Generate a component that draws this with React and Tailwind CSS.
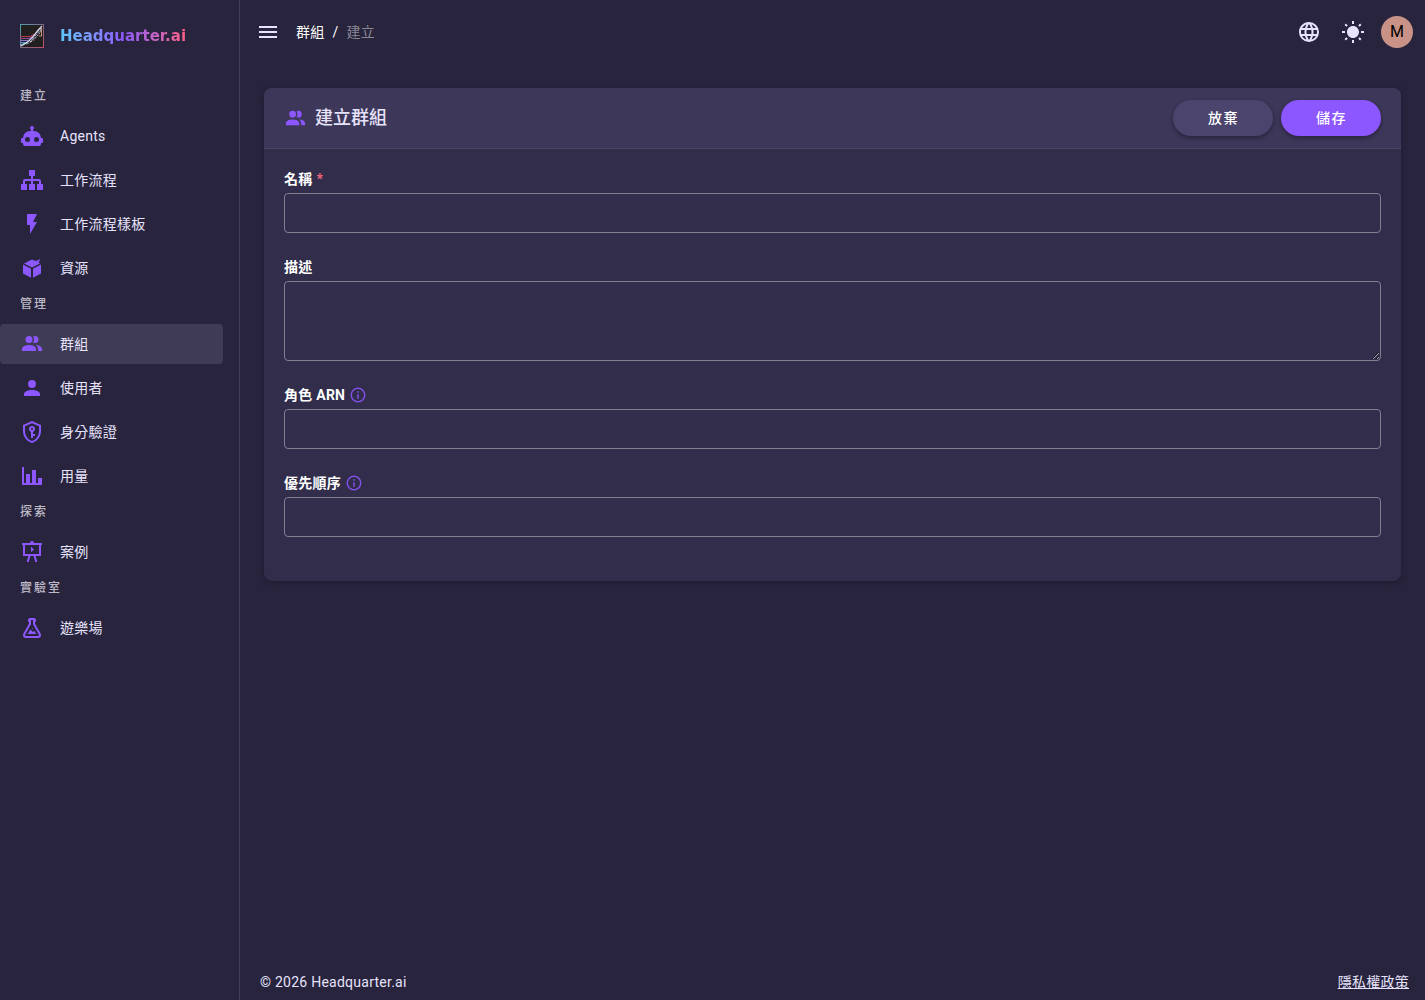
import { useState } from 'react'

const icons = {
    robot: 'M12,2A2,2 0 0,1 14,4C14,4.74 13.6,5.39 13,5.73V7H14A7,7 0 0,1 21,14H22A1,1 0 0,1 23,15V18A1,1 0 0,1 22,19H21V20A2,2 0 0,1 19,22H5A2,2 0 0,1 3,20V19H2A1,1 0 0,1 1,18V15A1,1 0 0,1 2,14H3A7,7 0 0,1 10,7H11V5.73C10.4,5.39 10,4.74 10,4A2,2 0 0,1 12,2M7.5,13A2.5,2.5 0 0,0 5,15.5A2.5,2.5 0 0,0 7.5,18A2.5,2.5 0 0,0 10,15.5A2.5,2.5 0 0,0 7.5,13M16.5,13A2.5,2.5 0 0,0 14,15.5A2.5,2.5 0 0,0 16.5,18A2.5,2.5 0 0,0 19,15.5A2.5,2.5 0 0,0 16.5,13Z',
    sitemap: 'M9,2V8H11V11H5C3.89,11 3,11.89 3,13V16H1V22H7V16H5V13H11V16H9V22H15V16H13V13H19V16H17V22H23V16H21V13C21,11.89 20.11,11 19,11H13V8H15V2H9Z',
    flash: 'M7,2V13H10V22L17,10H13L17,2H7Z',
    box: 'M3,8.6L11,12.8V21.8L3,17.6ZM21,8.6L13,12.8V21.8L21,17.6ZM4,7.4L12,3.4L14.8,4.8C17,4.9 18.7,4.2 20,2.8C19.9,4.2 19.4,5.4 18.6,6.4L20,7.4L12,11.4Z',
    group: 'M16 17V19H2V17S2 13 9 13 16 17 16 17M12.5 7.5A3.5 3.5 0 1 0 9 11A3.5 3.5 0 0 0 12.5 7.5M15.94 13A5.32 5.32 0 0 1 18 17V19H22V17S22 13.37 15.94 13M15 4A3.39 3.39 0 0 0 13.07 4.59A5 5 0 0 1 13.07 10.41A3.39 3.39 0 0 0 15 11A3.5 3.5 0 0 0 15 4Z',
    user: 'M12,4A4,4 0 0,1 16,8A4,4 0 0,1 12,12A4,4 0 0,1 8,8A4,4 0 0,1 12,4M12,14C16.42,14 20,15.79 20,18V20H4V18C4,15.79 7.58,14 12,14Z',
    shield: 'M21,11C21,16.55 17.16,21.74 12,23C6.84,21.74 3,16.55 3,11V5L12,1L21,5V11M12,21C15.75,20 19,15.54 19,11.22V6.3L12,3.18L5,6.3V11.22C5,15.54 8.25,20 12,21M12,6A3,3 0 0,1 15,9C15,10.31 14.17,11.42 13,11.83V14H15V16H13V18H11V11.83C9.83,11.42 9,10.31 9,9A3,3 0 0,1 12,6M12,8A1,1 0 0,0 11,9A1,1 0 0,0 12,10A1,1 0 0,0 13,9A1,1 0 0,0 12,8Z',
    chart: 'M22,21H2V3H4V19H6V10H10V19H12V6H16V19H18V14H22V21Z',
    presentation: 'M2,3H10C10,1.7 10.9,1 12,1C13.1,1 14,1.7 14,3H22V5H21V16H15.7L17.2,22H15.2L13.6,16H10.4L8.8,22H6.8L8.3,16H3V5H2ZM5,5V14H19V5ZM11,6.8L14,9.5L11,12.2Z',
    flask: 'M5,19A1,1 0 0,0 6,20H18A1,1 0 0,0 19,19C19,18.79 18.93,18.59 18.82,18.43L13,8.35V4H11V8.35L5.18,18.43C5.07,18.59 5,18.79 5,19M6,22A3,3 0 0,1 3,19C3,18.4 3.18,17.84 3.5,17.37L9,7.81V6A1,1 0 0,1 8,5V4A2,2 0 0,1 10,2H14A2,2 0 0,1 16,4V5A1,1 0 0,1 15,6V7.81L20.5,17.37C20.82,17.84 21,18.4 21,19A3,3 0 0,1 18,22H6M13,16L14.34,14.66L16.27,18H7.73L10.39,13.39L13,16M12.5,12A0.5,0.5 0 0,1 13,12.5A0.5,0.5 0 0,1 12.5,13A0.5,0.5 0 0,1 12,12.5A0.5,0.5 0 0,1 12.5,12Z',
    menu: 'M3,6H21V8H3V6M3,11H21V13H3V11M3,16H21V18H3V16Z',
    web: 'M16.36,14C16.44,13.34 16.5,12.68 16.5,12C16.5,11.32 16.44,10.66 16.36,10H19.74C19.9,10.64 20,11.31 20,12C20,12.69 19.9,13.36 19.74,14M14.59,19.56C15.19,18.45 15.65,17.25 15.97,16H18.92C17.96,17.65 16.43,18.93 14.59,19.56M14.34,14H9.66C9.56,13.34 9.5,12.68 9.5,12C9.5,11.32 9.56,10.65 9.66,10H14.34C14.43,10.65 14.5,11.32 14.5,12C14.5,12.68 14.43,13.34 14.34,14M12,19.96C11.17,18.76 10.5,17.43 10.09,16H13.91C13.5,17.43 12.83,18.76 12,19.96M8,8H5.08C6.03,6.34 7.57,5.06 9.4,4.44C8.8,5.55 8.35,6.75 8,8M5.08,16H8C8.35,17.25 8.8,18.45 9.4,19.56C7.57,18.93 6.03,17.65 5.08,16M4.26,14C4.1,13.36 4,12.69 4,12C4,11.31 4.1,10.64 4.26,10H7.64C7.56,10.66 7.5,11.32 7.5,12C7.5,12.68 7.56,13.34 7.64,14M12,4.03C12.83,5.23 13.5,6.57 13.91,8H10.09C10.5,6.57 11.17,5.23 12,4.03M18.92,8H15.97C15.65,6.75 15.19,5.55 14.59,4.44C16.43,5.07 17.96,6.34 18.92,8M12,2C6.47,2 2,6.5 2,12A10,10 0 0,0 12,22A10,10 0 0,0 22,12A10,10 0 0,0 12,2Z',
    sun: 'M3.55 19.09L4.96 20.5L6.76 18.71L5.34 17.29M12 6C8.69 6 6 8.69 6 12S8.69 18 12 18 18 15.31 18 12C18 8.68 15.31 6 12 6M20 13H23V11H20M17.24 18.71L19.04 20.5L20.45 19.09L18.66 17.29M20.45 5L19.04 3.6L17.24 5.39L18.66 6.81M13 1H11V4H13M6.76 5.39L4.96 3.6L3.55 5L5.34 6.81L6.76 5.39M1 13H4V11H1M13 20H11V23H13',
    info: 'M11,9H13V7H11M12,20C7.59,20 4,16.41 4,12C4,7.59 7.59,4 12,4C16.41,4 20,7.59 20,12C20,16.41 16.41,20 12,20M12,2A10,10 0 0,0 2,12A10,10 0 0,0 12,22A10,10 0 0,0 22,12A10,10 0 0,0 12,2M11,17H13V11H11V17Z',
}

const sections = [
    {
        title: '建立',
        items: [
            { icon: 'robot', label: 'Agents' },
            { icon: 'sitemap', label: '工作流程' },
            { icon: 'flash', label: '工作流程樣板' },
            { icon: 'box', label: '資源' },
        ],
    },
    {
        title: '管理',
        items: [
            { icon: 'group', label: '群組' },
            { icon: 'user', label: '使用者' },
            { icon: 'shield', label: '身分驗證' },
            { icon: 'chart', label: '用量' },
        ],
    },
    { title: '探索', items: [{ icon: 'presentation', label: '案例' }] },
    { title: '實驗室', items: [{ icon: 'flask', label: '遊樂場' }] },
]

const Icon = ({ name, className = 'size-6' }) => (
    <svg viewBox="0 0 24 24" fill="currentColor" fillRule="evenodd" className={`shrink-0 ${className}`} aria-hidden="true">
        <path d={icons[name]} />
    </svg>
)

const Logo = () => (
    <svg viewBox="0 0 24 24" fill="none" className="size-6 shrink-0" aria-hidden="true">
        <defs>
            <linearGradient id="frame" x1="0" y1="0" x2="1" y2="1">
                <stop offset="0" stopColor="#4f9fae" />
                <stop offset="0.5" stopColor="#806a86" />
                <stop offset="1" stopColor="#b94f67" />
            </linearGradient>
        </defs>
        <rect x="0.5" y="0.5" width="23" height="23" fill="#211f20" stroke="url(#frame)" />
        <path d="M0 12.5H10L14 10" stroke="#b13c4c" />
        <path d="M0 14.5H9L14 11" stroke="#8e4b9b" />
        <path d="M0 16.5H8L12 13" stroke="#8a74d0" />
        <path d="M0 18.5H6L10 16" stroke="#5a91c9" />
        <path d="M0 20.5C4 20 6 19 9 17" stroke="#62c7dd" />
        <path d="M1 22C6 19 9 18 12 14S17 7 22 2" stroke="#e8e4ee" strokeWidth="1.2" />
        <path d="M6 20C11 19 12 16 15 12S20 8 21 3" stroke="#a9b9e8" strokeDasharray="3 1" />
        <path d="M10 18C14 17 15 14 17 12S20 9 21.500 5" stroke="#d8c3d5" strokeDasharray="2 1" />
        <path d="M21.500 4V12H19" stroke="#c79d75" />
    </svg>
)

const Sidebar = () => (
    <aside className="flex w-60 shrink-0 flex-col border-r border-[#433f56]">
        <a href="#" className="flex h-20 items-center gap-4 px-5 pb-2">
            <Logo />
            <span className="bg-linear-to-r from-[#5ac8fa] via-[#8c57ff] to-[#ff5c83] bg-clip-text font-['DejaVu_Sans'] text-[15px] leading-5 font-bold text-transparent">
                Headquarter.ai
            </span>
        </a>
        <nav>
            {sections.map((section) => (
                <section key={section.title}>
                    <h2 className="flex h-8 items-center px-5 text-xs font-medium tracking-[2px] text-[#bcb9c6]">{section.title}</h2>
                    <ul className="flex flex-col gap-1 pt-1 pr-4">
                        {section.items.map((item) => (
                            <li key={item.label}>
                                <a
                                    href="#"
                                    className={`flex h-10 items-center gap-4 rounded px-5 text-sm tracking-[0.018em] ${item.icon === 'group' ? 'bg-[#3f3b54]' : 'hover:bg-[#322e47]'}`}
                                >
                                    <Icon name={item.icon} className="size-6 text-[#8c57ff]" />
                                    {item.label}
                                </a>
                            </li>
                        ))}
                    </ul>
                </section>
            ))}
        </nav>
    </aside>
)

const TopBar = () => (
    <header className="flex h-16 items-center pr-3 pl-4">
        <button type="button" aria-label="選單">
            <Icon name="menu" />
        </button>
        <nav className="ml-4 flex items-center gap-2 text-sm tracking-[0.018em] text-white">
            <a href="#">群組</a>
            <span>/</span>
            <span className="text-[#8b8896]">建立</span>
        </nav>
        <div className="ml-auto flex items-center gap-5">
            <button type="button" aria-label="語言">
                <Icon name="web" />
            </button>
            <button type="button" aria-label="主題">
                <Icon name="sun" />
            </button>
            <button type="button" className="-ml-1 size-8 rounded-full bg-[#c99287] text-base text-black">
                M
            </button>
        </div>
    </header>
)

const inputStyle = 'w-full rounded border border-[#837f91] bg-transparent px-3 text-sm text-white outline-none focus:border-[#8c57ff]'

const Field = ({ id, label, required, info, children }) => (
    <div className="flex flex-col gap-1">
        <label htmlFor={id} className="flex h-5 items-center gap-1 text-sm font-bold tracking-[0.018em] text-white">
            {label}
            {required && <span className="text-[#f0687c]">*</span>}
            {info && <Icon name="info" className="size-[18px] text-[#8050e8]" />}
        </label>
        {children}
    </div>
)

const GroupForm = () => {
    const [form, setForm] = useState({ name: '', description: '', arn: '', priority: '' })

    const handleChange = (e) => setForm({ ...form, [e.target.id]: e.target.value })

    return (
        <form className="rounded-lg bg-[#312d4b] shadow-[0_2px_5px_#1a162c99]" onSubmit={(e) => e.preventDefault()}>
            <div className="flex items-center gap-2 rounded-t-lg border-b border-[#4b465f] bg-[#3d3759] px-5 py-3">
                <Icon name="group" className="size-[23px] text-[#8c57ff]" />
                <h1 className="text-lg font-medium">建立群組</h1>
                <div className="ml-auto flex gap-2 text-sm font-medium tracking-widest text-white">
                    <button type="button" className="h-9 w-25 rounded-full bg-[#4b446d] pl-px shadow-[0_2px_4px_#1a162c99]">
                        放棄
                    </button>
                    <button type="submit" className="h-9 w-25 rounded-full bg-[#8c57ff] pl-px shadow-[0_2px_4px_#1a162c99]">
                        儲存
                    </button>
                </div>
            </div>
            <div className="flex flex-col gap-6 px-5 pt-5 pb-11">
                <Field id="name" label="名稱" required>
                    <input id="name" type="text" required value={form.name} onChange={handleChange} className={`h-10 ${inputStyle}`} />
                </Field>
                <Field id="description" label="描述">
                    <textarea id="description" value={form.description} onChange={handleChange} className={`h-20 resize-y py-2 ${inputStyle}`} />
                </Field>
                <Field id="arn" label="角色 ARN" info>
                    <input id="arn" type="text" value={form.arn} onChange={handleChange} className={`h-10 ${inputStyle}`} />
                </Field>
                <Field id="priority" label="優先順序" info>
                    <input id="priority" type="text" value={form.priority} onChange={handleChange} className={`h-10 ${inputStyle}`} />
                </Field>
            </div>
        </form>
    )
}

export default function App() {
    return (
        <div lang="zh-Hant" className="flex min-h-screen bg-[#28243d] font-[Roboto,'Noto_Sans_CJK_TC',sans-serif] text-[#e7e3fc] antialiased">
            <Sidebar />
            <div className="flex min-w-0 flex-1 flex-col">
                <TopBar />
                <main className="flex-1 p-6">
                    <GroupForm />
                </main>
                <footer className="flex h-9 items-center justify-between pr-4 pl-5 text-sm tracking-[0.018em]">
                    <span>© 2026 Headquarter.ai</span>
                    <a href="#" className="underline">
                        隱私權政策
                    </a>
                </footer>
            </div>
        </div>
    )
}
